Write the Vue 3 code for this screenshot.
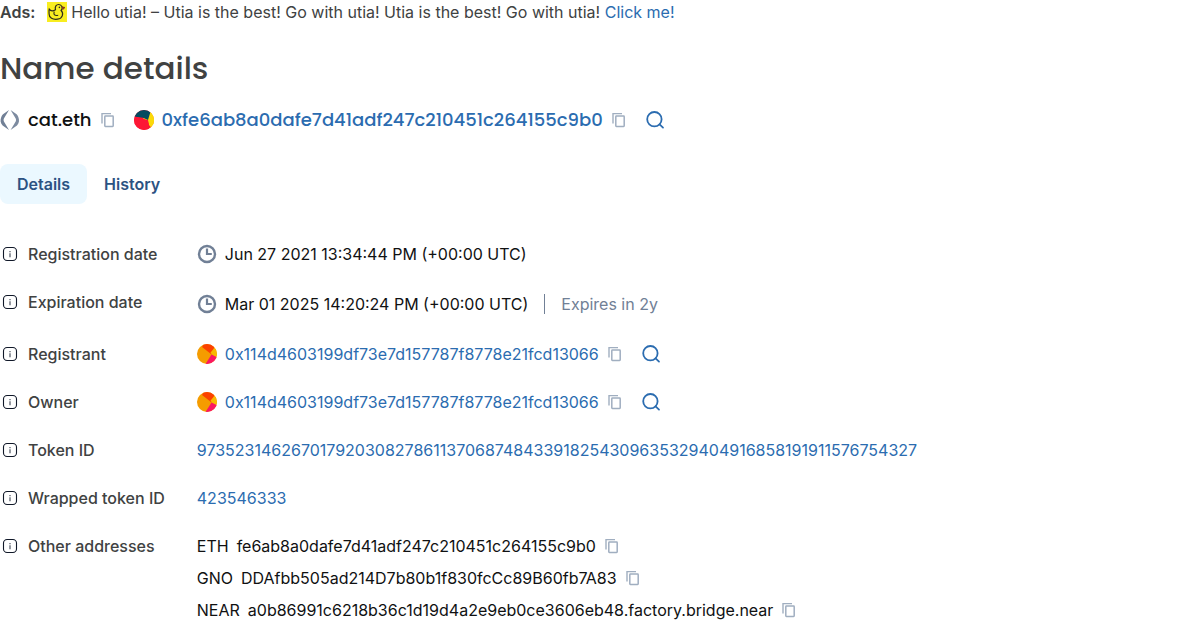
<script setup>
import { h } from 'vue'

const registrant = '0x114d4603199df73e7d157787f8778e21fcd13066'
const addressRows = [
  { label: 'Registrant', hash: registrant },
  { label: 'Owner', hash: registrant },
]
const tokenRows = [
  { label: 'Token ID', value: '97352314626701792030827861137068748433918254309635329404916858191911576754327' },
  { label: 'Wrapped token ID', value: '423546333' },
]
const otherAddresses = [
  { chain: 'ETH', address: 'fe6ab8a0dafe7d41adf247c210451c264155c9b0' },
  { chain: 'GNO', address: 'DDAfbb505ad214D7b80b1f830fcCc89B60fb7A83' },
  { chain: 'NEAR', address: 'a0b86991c6218b36c1d19d4a2e9eb0ce3606eb48.factory.bridge.near' },
]

const svg = (size, children) =>
  h('svg', { width: size, height: size, viewBox: `0 0 ${size} ${size}`, fill: 'none', 'aria-hidden': 'true' }, children)

const InfoIcon = () => svg(20, [
  h('rect', { x: 3.5, y: 3.5, width: 13, height: 13, rx: 3.6, stroke: '#101828', 'stroke-width': 1.1 }),
  h('path', { d: 'M10 9.2v4', stroke: '#3b4250', 'stroke-width': 1.1 }),
  h('path', { d: 'M10 7v1.2', stroke: '#3b4250', 'stroke-width': 1.1 }),
])

const ClockIcon = () => svg(20, [
  h('circle', { cx: 10, cy: 10, r: 8, stroke: '#718096', 'stroke-width': 2.4 }),
  h('path', { d: 'M10 4.5V10h4.8', stroke: '#718096', 'stroke-width': 2.2 }),
])

const SearchIcon = () => svg(20, [
  h('circle', { cx: 9.4, cy: 9.2, r: 7.2, stroke: '#2b6cb0', 'stroke-width': 1.8 }),
  h('path', { d: 'M14.6 14.4l3.4 3.2', stroke: '#2b6cb0', 'stroke-width': 1.8, 'stroke-linecap': 'round' }),
])

const CopyButton = () =>
  h('button', { type: 'button', class: 'copy', 'aria-label': 'Copy' }, svg(20, [
    h('path', { d: 'M4 13.4V3.6h9', stroke: '#a0aec0', 'stroke-width': 1.4 }),
    h('rect', { x: 6.8, y: 6.1, width: 8.4, height: 10.3, rx: 0.6, stroke: '#a0aec0', 'stroke-width': 1.5 }),
  ]))
</script>

<template>
  <main class="page">
    <p class="ads">
      <strong>Ads:</strong>
      <svg class="duck" width="20" height="20" viewBox="0 0 20 20" fill="none" aria-hidden="true">
        <path d="M0 0h20v20H0z" fill="#f8ed20" />
        <path d="M2.2 7.2C3.4 9 6 9.3 8.5 7.8 7.6 4.5 9.3 2.4 11.8 2.5c3 .1 4.5 3.6 2.3 6 2.8 2.7 1.7 8-3.5 8.7-4.8.7-8.6-1.4-8.5-5.2 0-1.7-.3-3.2.1-4.8Z" stroke="#302d1c" stroke-width="1.2" />
        <path d="M7.2 9.5c-.9 3.2.5 4.6 4 3.8" stroke="#302d1c" stroke-width="1.1" />
        <path d="M15 4.7l3 .8-2.3 2.3" fill="#9b2d20" stroke="#5e2418" stroke-width=".6" />
        <circle cx="12.4" cy="5.4" r=".8" fill="#302d1c" />
      </svg>
      <span>Hello utia! – Utia is the best! Go with utia! Utia is the best! Go with utia! <a href="#">Click me!</a></span>
    </p>

    <h1>Name details</h1>

    <div class="entity">
      <svg width="20" height="20" viewBox="0 0 20 20" aria-hidden="true">
        <path d="M9 0 3.9 8.6c-.5.9-.5 1.9 0 2.8L9 20l-6.4-4.6C.3 13.3.1 9.8 1.3 7 1.7 5.8 2.2 4.9 3 4.3Z" fill="#718096" />
        <path d="m10.6 0 5.1 8.6c.5.9.5 1.9 0 2.8L10.6 20l6.4-4.6c2.3-2.1 2.5-5.6 1.3-8.4-.4-1.2-.9-2.1-1.7-2.7Z" fill="#7d8ba0" />
      </svg>
      <span class="entity-name">cat.eth</span>
      <CopyButton />
      <svg class="avatar owner" width="20" height="20" viewBox="0 0 20 20" aria-hidden="true">
        <path d="M0 0h20v20H0z" fill="#fd1735" />
        <path d="M9 8.5 17 1l4 5v11l-4 3Z" fill="#f8f000" />
        <path d="m15 3 6-1v18l-5-4-2-7Z" fill="#fbda08" />
        <path d="M0 6.5V0h17l-3 10-5-2.2Z" fill="#034b60" />
        <path d="m9 8.2 8 9-3 4-6-8Z" fill="#fd1735" />
        <path d="m0 6.5 14 3.5 1 4-1 7H0Z" fill="#fd1735" />
      </svg>
      <a class="entity-hash" href="#">0xfe6ab8a0dafe7d41adf247c210451c264155c9b0</a>
      <CopyButton />
      <button type="button" class="search" aria-label="Search address"><SearchIcon /></button>
    </div>

    <div class="tabs" role="tablist">
      <button type="button" role="tab" class="tab active" aria-selected="true">Details</button>
      <button type="button" role="tab" class="tab" aria-selected="false">History</button>
    </div>

    <dl class="details">
      <dt><InfoIcon />Registration date</dt>
      <dd class="date"><ClockIcon />Jun 27 2021 13:34:44 PM (+00:00 UTC)</dd>

      <dt><InfoIcon />Expiration date</dt>
      <dd class="date expiry">
        <ClockIcon /><span>Mar 01 2025 14:20:24 PM (+00:00 UTC)</span>
        <i class="divider"></i><span class="muted">Expires in 2y</span>
      </dd>

      <template v-for="row in addressRows" :key="row.label">
        <dt><InfoIcon />{{ row.label }}</dt>
        <dd>
          <svg class="avatar" width="20" height="20" viewBox="0 0 20 20" aria-hidden="true">
            <path d="M0 0h20v20H0z" fill="#f59c00" />
            <path d="M5 3 8-2h12l-6 12Z" fill="#fb4100" />
            <path d="m13.5 8.5 5-5.5 4 5-4 6Z" fill="#f7b801" />
            <path d="m14.5 10.5 6 3-5 8-7-1.5Z" fill="#fa1762" />
          </svg>
          <a class="hash" href="#">{{ row.hash }}</a>
          <CopyButton />
          <button type="button" class="search" aria-label="Search address"><SearchIcon /></button>
        </dd>
      </template>

      <template v-for="row in tokenRows" :key="row.label">
        <dt><InfoIcon />{{ row.label }}</dt>
        <dd><a href="#">{{ row.value }}</a></dd>
      </template>

      <dt><InfoIcon />Other addresses</dt>
      <dd class="others">
        <div v-for="item in otherAddresses" :key="item.chain" class="other">
          <span>{{ item.chain }}</span><span>{{ item.address }}</span><CopyButton />
        </div>
      </dd>
    </dl>
  </main>
</template>

<style>
body { background: #fff; }
</style>

<style scoped>
.page {
  font: 400 16px/24px Inter, "Liberation Sans", sans-serif;
  color: #101112;
}
.page :deep(svg) { flex: none; display: block; }
a { color: #2b6cb0; text-decoration: none; }
button {
  font: inherit;
  padding: 0;
  border: 0;
  background: none;
  cursor: pointer;
}
.copy { margin-left: 6px; }
.search { margin-left: 16px; }

.ads { display: flex; align-items: center; margin: 0; color: #404242; }
.ads strong { font-weight: 600; }
.duck { margin: 0 4px 0 12px; }

h1 {
  margin: 24px 0 16px;
  font: 500 31px/40px Poppins, Inter, "Liberation Sans", sans-serif;
  color: #404242;
}

.entity {
  display: flex;
  align-items: center;
  font: 500 18px/32px Poppins, Inter, "Liberation Sans", sans-serif;
}
.entity-name, .entity-hash, .hash { margin-left: 8px; }
.avatar { border-radius: 50%; }
.owner { margin-left: 16px; }

.tabs { display: flex; margin-top: 28px; }
.tab {
  padding: 8px 17px;
  border-radius: 8px;
  font-weight: 600;
  color: #2c5282;
}
.active { background: #ebf8ff; }

.details {
  display: grid;
  grid-template-columns: max-content minmax(0, 1fr);
  gap: 24px 32px;
  align-items: start;
  margin: 38px 0 0;
}
dt { display: flex; align-items: center; gap: 8px; font-weight: 500; color: #404242; }
dd { display: flex; align-items: center; margin: 0; }
.date { gap: 8px; }
.expiry { min-height: 28px; }
.divider { width: 1px; height: 20px; margin: 0 8px; background: #718096; }
.muted { color: #718096; }
.others { flex-direction: column; align-items: flex-start; gap: 8px; }
.other { display: flex; align-items: center; }
.other span + span { margin-left: 8px; }
</style>
